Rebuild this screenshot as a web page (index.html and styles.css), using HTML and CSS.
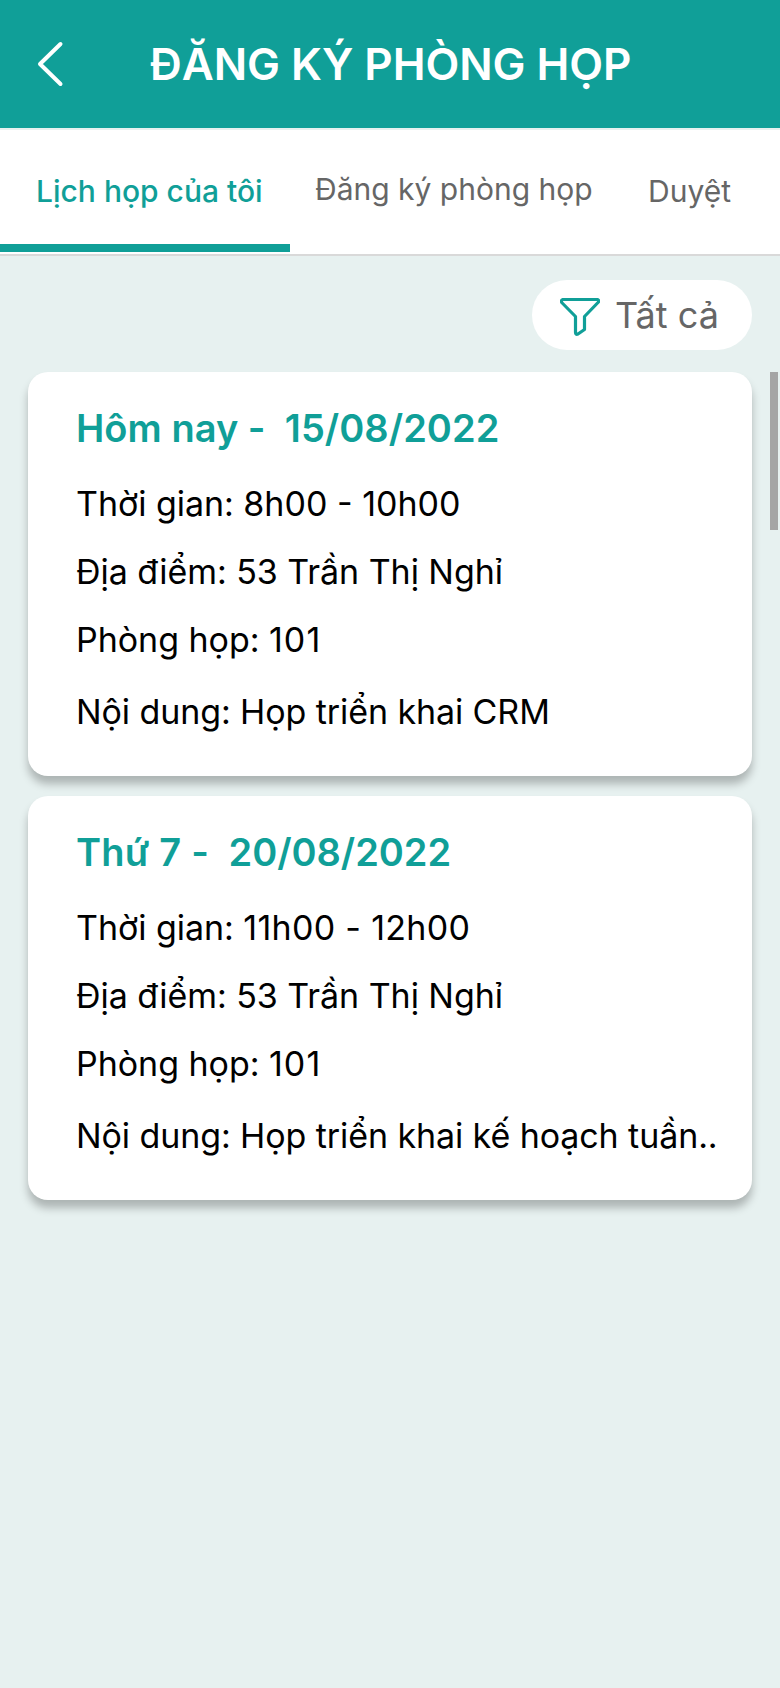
FILE: index.html
```html
<!DOCTYPE html>
<html lang="vi">
<head>
<meta charset="utf-8">
<title>Đăng ký phòng họp</title>
<link rel="stylesheet" href="styles.css">
</head>
<body>
<header class="header">
  <svg class="back" viewBox="0 0 28 46" width="28" height="46"><path d="M24.500 3 4 23 24.500 43"/></svg>
  <h1 class="title">ĐĂNG KÝ PHÒNG HỌP</h1>
</header>
<nav class="tabs">
  <a class="tab active"><span>Lịch họp của tôi</span></a>
  <a class="tab register"><span>Đăng ký phòng họp</span></a>
  <a class="tab approve"><span>Duyệt</span></a>
</nav>
<main class="content">
  <div class="toolbar">
    <button class="filter">
      <svg class="funnel" viewBox="0 0 40 38" width="40" height="38"><path d="M3 1.500H37Q39 1.500 38.500 4L24.500 18.500V31.500L18 36Q15.500 37 15.500 34.500V18.500L1.700 4.500Q.8 2 3 1.500Z"/></svg>
      <span>Tất cả</span>
    </button>
  </div>
  <section class="list">
    <article class="card">
      <h2 class="date">Hôm nay -&nbsp; 15/08/2022</h2>
      <p class="line">Thời gian: <span class="time">8h00 - 10h00</span></p>
      <p class="line">Địa điểm: 53 Trần Thị Nghỉ</p>
      <p class="line">Phòng họp: <span class="room">101</span></p>
      <p class="line topic">Nội dung: Họp triển khai CRM</p>
    </article>
    <article class="card">
      <h2 class="date"><span class="day">Thứ 7 -&nbsp; </span><span class="full-date">20/08/2022</span></h2>
      <p class="line">Thời gian: <span class="time late">11h00 - 12h00</span></p>
      <p class="line">Địa điểm: 53 Trần Thị Nghỉ</p>
      <p class="line">Phòng họp: <span class="room">101</span></p>
      <p class="line topic">Nội dung: Họp triển khai kế hoạch tuần..</p>
    </article>
  </section>
  <div class="scrollbar"></div>
</main>
</body>
</html>
```
FILE: styles.css
```css
* { box-sizing: border-box; margin: 0; padding: 0; }
body { font-family: Inter, "Noto Sans", sans-serif; background: #e7f1f0; color: #000; width: 780px; height: 1688px; overflow: hidden; display: flex; flex-direction: column; }
.header { height: 128px; background: #109f98; display: flex; align-items: center; padding-left: 36px; flex: none; }
.back { fill: none; stroke: #fff; stroke-width: 4; stroke-linecap: round; stroke-linejoin: round; }
.title { margin-left: 86px; color: #fff; font-size: 44px; font-weight: 600; line-height: 54px; letter-spacing: -.04px; white-space: nowrap; }
.tabs { margin-top: 2px; height: 126px; background: #fff; border-bottom: 2px solid #d9d9d9; display: flex; flex: none; font-size: 30px; line-height: 36px; color: #666; }
.tab { padding-top: 43px; white-space: nowrap; }
.active { width: 290px; height: 122px; padding-left: 36px; color: #109f98; font-weight: 500; border-bottom: 8px solid #109f98; }
.register { padding-left: 25px; width: 358px; padding-top: 41px; }
.content { position: relative; flex: 1; padding: 24px 28px 0; }
.toolbar { display: flex; justify-content: flex-end; }
.filter { width: 220px; height: 70px; border: 0; border-radius: 35px; background: #fff; display: flex; align-items: center; padding-left: 28px; gap: 15px; font: 400 36px/44px Inter, "Noto Sans", sans-serif; color: #666; white-space: nowrap; }
.funnel { fill: none; stroke: #109f98; stroke-width: 3.2; stroke-linejoin: round; margin-top: 4px; }
.list { margin-top: 22px; display: flex; flex-direction: column; gap: 20px; }
.card { height: 404px; border-radius: 20px; background: #fff; box-shadow: 0 8px 8px rgba(0,0,0,.25); padding: 33px 0 0 48px; white-space: nowrap; }
.date { color: #109f98; font-size: 38px; font-weight: 600; line-height: 46px; margin-bottom: 19px; letter-spacing: .03px; }
.day { letter-spacing: .2px; }
.full-date { letter-spacing: -.05px; }
.line { font-size: 34px; line-height: 68px; letter-spacing: -.04px; }
.time { letter-spacing: 0; }
.late { letter-spacing: .3px; }
.room { letter-spacing: 1.1px; }
.topic { margin-top: 4px; letter-spacing: -.09px; }
.scrollbar { position: absolute; top: 116px; right: 2px; width: 8px; height: 158px; background: #a5a5a5; }
```
